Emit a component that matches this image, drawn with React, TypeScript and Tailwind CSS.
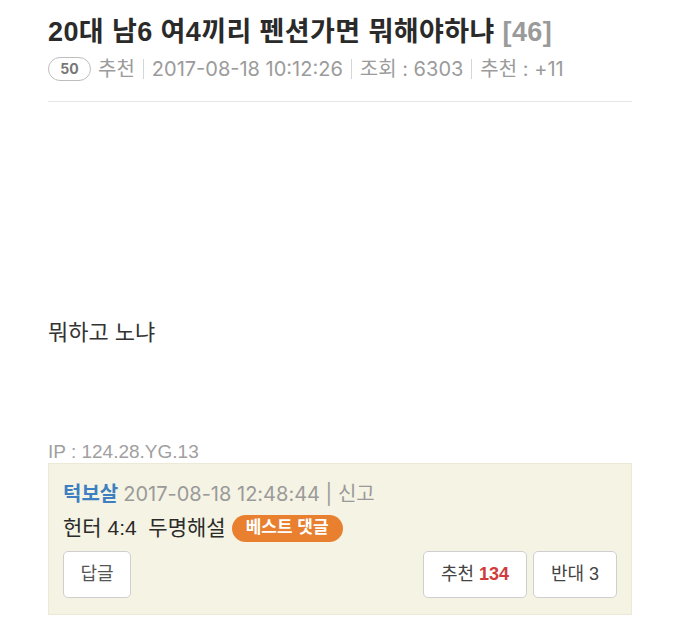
export default function App() {
  return (
    <div
      className="min-h-[634px] w-[687px] bg-white px-12 pt-[13px] text-[#333]"
      style={{ fontFamily: '"Liberation Sans", "Noto Sans CJK KR", sans-serif' }}
    >
      {/* Title */}
      <h1 className="text-[27px] font-bold leading-[38px] tracking-[0.4px] text-[#2a2a2a]">
        20대 남6 여4끼리 펜션가면 뭐해야하냐 <span className="text-[#9a9a9a]">[46]</span>
      </h1>

      {/* Meta */}
      <div className="mt-[6px] flex items-center text-[20px] leading-[24px] text-[#9b9b9b] [font-family:Inter,'Noto_Sans_CJK_KR',sans-serif]">
        <span className="mr-[7px] flex h-[24px] w-[43px] items-center justify-center rounded-full border border-[#bdbdbd] text-[14px] font-bold text-[#777]">
          50
        </span>
        <span>추천</span>
        <span className="mx-[8px] h-[20px] w-px bg-[#d6d6d6]" />
        <span>2017-08-18 10:12:26</span>
        <span className="mx-[8px] h-[20px] w-px bg-[#d6d6d6]" />
        <span>조회 : 6303</span>
        <span className="mx-[8px] h-[20px] w-px bg-[#d6d6d6]" />
        <span>추천 : +11</span>
      </div>

      <div className="mt-[20px] h-px w-[584px] bg-[#e6e6e6]" />

      {/* Body */}
      <p className="mt-[216px] text-[22px] leading-[30px] text-[#333]">뭐하고 노냐</p>

      <p className="mt-[93px] text-[19px] leading-[22px] text-[#a0a0a0]">IP : 124.28.YG.13</p>

      {/* Comment */}
      <div className="w-[584px] border border-[#ece9d6] bg-[#f5f3e3] px-[14px] pb-[16px] pt-[18px]">
        <div className="flex items-center text-[20px] leading-[24px] text-[#9a9a9a] [font-family:Inter,'Noto_Sans_CJK_KR',sans-serif]">
          <span className="mr-[5px] font-bold text-[#3d7fc1]">턱보살</span>
          <span>2017-08-18 12:48:44 | 신고</span>
        </div>
        <div className="mt-[8px] flex items-center text-[21px] leading-[28px] text-[#2a2a2a]">
          <span className="whitespace-pre">헌터 4:4  두명해설</span>
          <span className="ml-[6px] flex h-[27px] items-center rounded-full bg-[#e8802f] px-[14px] text-[17px] font-bold text-white">
            베스트 댓글
          </span>
        </div>
        <div className="mt-[9px] flex items-center">
          <button className="flex h-[47px] w-[68px] items-center justify-center rounded-[5px] border border-[#cfcfcf] bg-white text-[18px] text-[#555]">
            답글
          </button>
          <div className="ml-auto flex gap-[6px]">
            <button className="flex h-[47px] w-[104px] items-center justify-center rounded-[5px] border border-[#cfcfcf] bg-white text-[18px] text-[#444]">
              추천 <span className="ml-[5px] font-bold text-[#cf3c3c]">134</span>
            </button>
            <button className="flex h-[47px] w-[84px] items-center justify-center rounded-[5px] border border-[#cfcfcf] bg-white text-[18px] text-[#444]">
              반대 3
            </button>
          </div>
        </div>
      </div>
    </div>
  );
}
